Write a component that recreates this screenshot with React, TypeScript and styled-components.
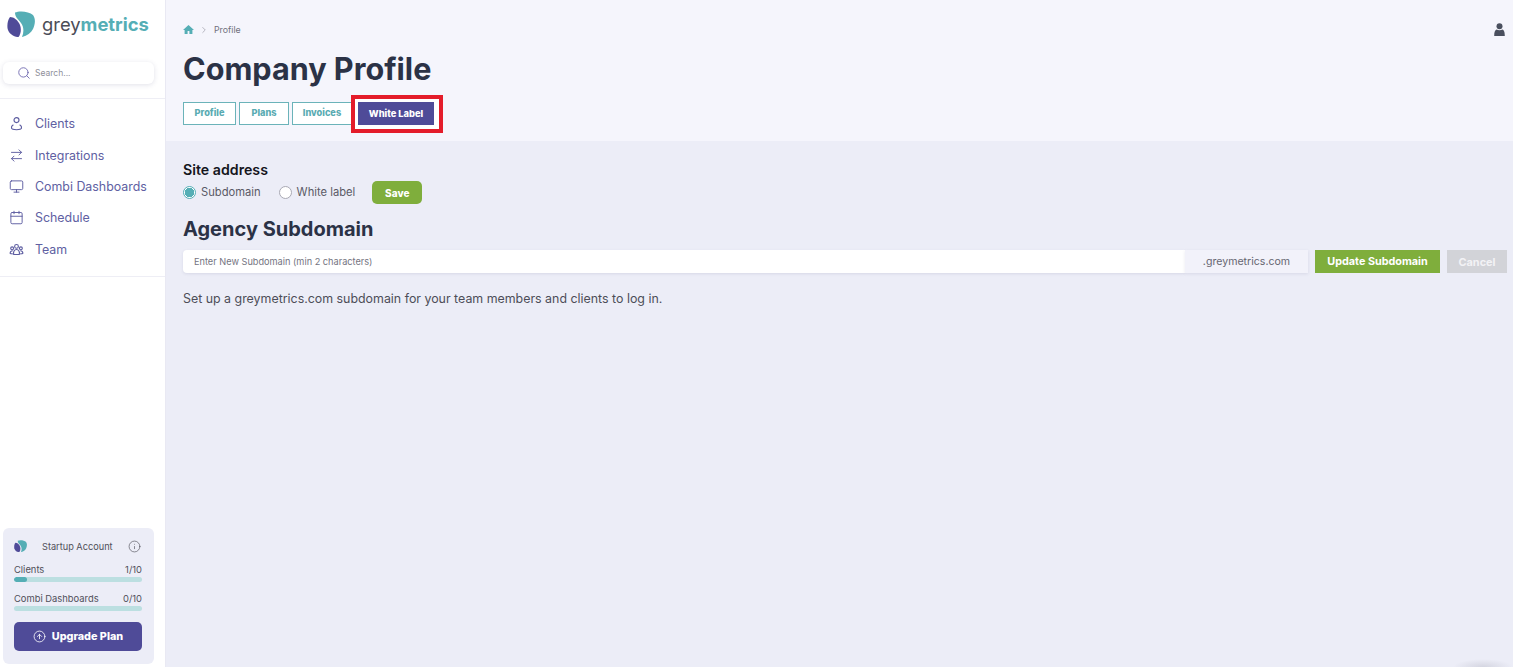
import React from "react";
import styled, { createGlobalStyle } from "styled-components";
import { Search, ArrowRightLeft, Monitor, Calendar, Info, CircleArrowUp, ChevronRight } from "lucide-react";

const Global = createGlobalStyle`
  html, body { margin: 0; padding: 0; height: 100%; overflow: hidden; }
  body { font-family: Inter, "Liberation Sans", sans-serif; background: #ecedf7; }
  #root { height: 100%; }
  * { box-sizing: border-box; }
`;

const Shell = styled.div`
  position: relative;
  display: flex;
  width: 1513px;
  height: 667px;
  overflow: hidden;
`;

const CornerShade = styled.div`
  position: absolute;
  right: 0;
  bottom: -8px;
  width: 60px;
  height: 16px;
  background: radial-gradient(ellipse at center, rgba(90, 90, 110, 0.16), rgba(90, 90, 110, 0) 70%);
`;

const Sidebar = styled.aside`
  width: 166px;
  flex: none;
  height: 667px;
  background: #fff;
  border-right: 1px solid #e9e9f3;
  display: flex;
  flex-direction: column;
`;

const LogoRow = styled.div`
  height: 49px;
  display: flex;
  align-items: center;
  padding: 0 0 1px 7px;
  gap: 7px;
`;

const LogoText = styled.div`
  font-size: 18.4px;
  color: #4b4d57;
`;

const LogoStrong = styled.span`
  font-weight: 700;
  color: #55aeb5;
`;

const SearchWrap = styled.div`
  padding: 13px 11px 14px 3px;
  border-bottom: 1px solid #eeeef5;
  height: 50px;
`;

const SearchBox = styled.div`
  height: 22px;
  background: #fff;
  border-radius: 6px;
  box-shadow: 0 1px 5px rgba(70, 70, 120, 0.16);
  display: flex;
  align-items: center;
  padding-left: 14px;
  gap: 4px;
  font-size: 8.5px;
  color: #8f8f9b;
  width: 151px;
`;

const Nav = styled.nav`
  display: flex;
  flex-direction: column;
  padding: 9px 0 11px 9px;
  border-bottom: 1px solid #eeeef5;
`;

const NavItem = styled.a`
  height: 31.4px;
  display: flex;
  align-items: center;
  gap: 11px;
  font-size: 12.4px;
  color: #6060a2;
  svg { color: #5c5ca0; flex: none; }
`;

const Plan = styled.div`
  margin: auto 11px 3px 3px;
  width: 151px;
  height: 136px;
  background: #ecedf7;
  border-radius: 6px;
  padding: 11px 12px 0 11px;
`;

const PlanHead = styled.div`
  display: flex;
  align-items: center;
  height: 14px;
  font-size: 9.2px;
  color: #50505a;
  margin-bottom: 11px;
`;

const PlanTitle = styled.span`
  margin-left: 15px;
  flex: 1;
`;

const InfoSlot = styled.span`
  display: flex;
  margin-right: 1px;
`;

const MeterLabel = styled.div`
  display: flex;
  justify-content: space-between;
  font-size: 9.4px;
  line-height: 11px;
  color: #50505a;
  margin-bottom: 2px;
`;

const Track = styled.div`
  height: 5px;
  border-radius: 3px;
  background: #bcdfe1;
  margin-bottom: 11px;
  overflow: hidden;
`;

const Fill = styled.div<{ $w: number }>`
  height: 100%;
  width: ${(p) => p.$w}px;
  border-radius: 3px;
  background: #55aeb5;
`;

const Upgrade = styled.div`
  margin-top: 2px;
  height: 29px;
  background: #4f4b98;
  border-radius: 5px;
  display: flex;
  align-items: center;
  justify-content: center;
  gap: 6px;
  color: #fff;
  font-size: 10.8px;
  font-weight: 800;
`;

const Main = styled.main`
  flex: 1;
  min-width: 0;
  display: flex;
  flex-direction: column;
`;

const Head = styled.header`
  height: 141px;
  flex: none;
  background: #f5f5fc;
  padding: 0 0 0 17px;
`;

const Crumbs = styled.div`
  height: 59px;
  display: flex;
  align-items: center;
  font-size: 8.8px;
  color: #71717c;
  gap: 5px;
`;

const UserSlot = styled.div`
  margin-left: auto;
  margin-right: 8px;
  display: flex;
`;

const Title = styled.h1`
  margin: -8px 0 0;
  height: 36px;
  line-height: 36px;
  font-size: 30.6px;
  font-weight: 700;
  color: #2b3246;
`;

const Tabs = styled.div`
  display: flex;
  margin-top: 8px;
  gap: 3px;
  align-items: flex-start;
`;

const Tab = styled.div<{ $w: number }>`
  width: ${(p) => p.$w}px;
  height: 23px;
  margin-top: 7px;
  padding-bottom: 2px;
  display: flex;
  align-items: center;
  justify-content: center;
  border: 1px solid #6bb3b9;
  background: #fff;
  font-size: 9.2px;
  font-weight: 800;
  color: #5aabb2;
`;

const ActiveFrame = styled.div`
  width: 92px;
  height: 38px;
  margin-left: -4px;
  border: 4px solid #e41c2a;
  background: #fff;
  padding: 3px 5px 4px 3px;
  z-index: 1;
`;

const ActiveTab = styled.div`
  height: 100%;
  background: #4f4b98;
  display: flex;
  align-items: center;
  justify-content: center;
  color: #fff;
  font-size: 9.3px;
  font-weight: 800;
`;

const Body = styled.section`
  flex: 1;
  padding: 21px 6px 0 17px;
  background: #ecedf7;
`;

const SiteLabel = styled.div`
  font-size: 14.2px;
  line-height: 16px;
  font-weight: 600;
  color: #14151d;
`;

const RadioRow = styled.div`
  display: flex;
  align-items: center;
  height: 23px;
  margin-top: 3px;
  font-size: 11.2px;
  color: #5a5a66;
`;

const RadioDot = styled.span<{ $on?: boolean }>`
  width: 13px;
  height: 13px;
  border-radius: 50%;
  border: 1px solid ${(p) => (p.$on ? "#55aeb5" : "#a9a9b4")};
  background: ${(p) => (p.$on ? "radial-gradient(circle, #55aeb5 0 4.5px, #fff 5px)" : "#fff")};
  margin-right: 5px;
  flex: none;
`;

const RadioText = styled.span<{ $gap: number }>`
  margin-right: ${(p) => p.$gap}px;
  padding-bottom: 2px;
`;

const SaveBtn = styled.div`
  width: 50px;
  height: 23px;
  border-radius: 5px;
  background: #7fae3c;
  color: #fff;
  font-size: 10px;
  font-weight: 800;
  display: flex;
  align-items: center;
  justify-content: center;
`;

const SubTitle = styled.h2`
  margin: 13px 0 0;
  font-size: 20px;
  line-height: 24px;
  font-weight: 700;
  color: #2b3246;
`;

const FormRow = styled.div`
  display: flex;
  align-items: stretch;
  height: 23px;
  margin-top: 9px;
`;

const InputField = styled.div`
  width: 1002px;
  background: #fff;
  border-radius: 4px 0 0 4px;
  box-shadow: 0 1px 3px rgba(70, 70, 120, 0.12);
  display: flex;
  align-items: center;
  padding-left: 11px;
  font-size: 9.2px;
  color: #74747f;
`;

const Suffix = styled.div`
  width: 123px;
  background: #f2f2fa;
  box-shadow: 0 1px 3px rgba(70, 70, 120, 0.12);
  display: flex;
  align-items: center;
  justify-content: center;
  font-size: 10.6px;
  color: #666671;
`;

const UpdateBtn = styled.div`
  width: 125px;
  margin-left: 7px;
  background: #7fae3c;
  color: #fff;
  font-size: 10.8px;
  font-weight: 700;
  display: flex;
  align-items: center;
  justify-content: center;
`;

const CancelBtn = styled.div`
  width: 60px;
  margin-left: 7px;
  background: #d2d3d8;
  color: #f2f2f5;
  font-size: 10.9px;
  font-weight: 700;
  display: flex;
  align-items: center;
  justify-content: center;
`;

const Hint = styled.p`
  margin: 18px 0 0;
  font-size: 12.4px;
  line-height: 16px;
  color: #4d4d58;
`;

const LogoMark = ({ size }: { size: number }) => (
  <svg width={size} height={size * 0.95} viewBox="0 0 28 26.500" fill="none">
    <path d="M8 1.500C12-.5 22 0 26 4c3 4 2 10 0 14-2 4-6 7-11 8 2-5 2-10-1-14C11 8 8 6 8 1.500z" fill="#55aeb5" />
    <path d="M3 6c4 0 7 3 9 6 2.500 4 2.500 10-.5 14C7 26 2 23 .7 18-.3 13 1 9 3 6z" fill="#4f4b98" />
  </svg>
);

const TeamIcon = () => (
  <svg width="15" height="15" viewBox="0 0 24 24" fill="none" stroke="currentColor" strokeWidth="1.8">
    <circle cx="12" cy="7" r="3" />
    <circle cx="5" cy="10" r="2.300" />
    <circle cx="19" cy="10" r="2.300" />
    <path d="M7.500 20c-1-4 1-8 4.500-8s5.500 4 4.500 8z" />
    <path d="M6 14c-3 0-4.500 2-4 4.500l4 .5M18 14c3 0 4.500 2 4 4.500l-4 .5" />
  </svg>
);

const ClientIcon = () => (
  <svg width="15" height="15" viewBox="0 0 24 24" fill="none" stroke="currentColor" strokeWidth="1.800">
    <circle cx="12" cy="6.500" r="4" />
    <path d="M7 14c-2.500 1.500-3.500 3.500-3 5.500.5 2 3 2.500 8 2.500s7.500-.5 8-2.500c.5-2-.5-4-3-5.500" />
  </svg>
);

const HomeIcon = () => (
  <svg width="11" height="11" viewBox="0 0 24 24" fill="#55aeb5">
    <path d="M12 2 0 13h3.500v9H10v-7h4v7h6.500v-9H24z" />
  </svg>
);

const PersonIcon = () => (
  <svg width="11" height="13" viewBox="0 0 11 13" fill="#4a4f5e">
    <circle cx="5.500" cy="3.200" r="3" />
    <path d="M2.500 6.500C1 7.200.2 8.800.2 13h10.600c0-4.200-.8-5.800-2.300-6.500-1.800 1-4.200 1-6 0z" />
  </svg>
);

const items = [
  { label: "Clients", icon: <ClientIcon /> },
  { label: "Integrations", icon: <ArrowRightLeft size={15} strokeWidth={1.5} /> },
  { label: "Combi Dashboards", icon: <Monitor size={15} strokeWidth={1.5} /> },
  { label: "Schedule", icon: <Calendar size={15} strokeWidth={1.5} /> },
  { label: "Team", icon: <TeamIcon /> },
];

export default function App() {
  return (
    <Shell>
      <Global />
      <Sidebar>
        <LogoRow>
          <LogoMark size={28} />
          <LogoText>
            grey<LogoStrong>metrics</LogoStrong>
          </LogoText>
        </LogoRow>
        <SearchWrap>
          <SearchBox>
            <Search size={14} color="#6a63ad" strokeWidth={1.5} />
            Search...
          </SearchBox>
        </SearchWrap>
        <Nav>
          {items.map((it) => (
            <NavItem key={it.label}>
              {it.icon}
              {it.label}
            </NavItem>
          ))}
        </Nav>
        <Plan>
          <PlanHead>
            <LogoMark size={13} />
            <PlanTitle>Startup Account</PlanTitle>
            <InfoSlot>
              <Info size={13} strokeWidth={1.2} color="#50505a" />
            </InfoSlot>
          </PlanHead>
          <MeterLabel>
            <span>Clients</span>
            <span>1/10</span>
          </MeterLabel>
          <Track>
            <Fill $w={13} />
          </Track>
          <MeterLabel>
            <span>Combi Dashboards</span>
            <span>0/10</span>
          </MeterLabel>
          <Track>
            <Fill $w={0} />
          </Track>
          <Upgrade>
            <CircleArrowUp size={13} strokeWidth={1.5} />
            Upgrade Plan
          </Upgrade>
        </Plan>
      </Sidebar>
      <Main>
        <Head>
          <Crumbs>
            <HomeIcon />
            <ChevronRight size={10} color="#a9a9b4" />
            <span>Profile</span>
            <UserSlot>
              <PersonIcon />
            </UserSlot>
          </Crumbs>
          <Title>Company Profile</Title>
          <Tabs>
            <Tab $w={53}>Profile</Tab>
            <Tab $w={50}>Plans</Tab>
            <Tab $w={60}>Invoices</Tab>
            <ActiveFrame>
              <ActiveTab>White Label</ActiveTab>
            </ActiveFrame>
          </Tabs>
        </Head>
        <Body>
          <SiteLabel>Site address</SiteLabel>
          <RadioRow>
            <RadioDot $on />
            <RadioText $gap={18}>Subdomain</RadioText>
            <RadioDot />
            <RadioText $gap={17}>White label</RadioText>
            <SaveBtn>Save</SaveBtn>
          </RadioRow>
          <SubTitle>Agency Subdomain</SubTitle>
          <FormRow>
            <InputField>Enter New Subdomain (min 2 characters)</InputField>
            <Suffix>.greymetrics.com</Suffix>
            <UpdateBtn>Update Subdomain</UpdateBtn>
            <CancelBtn>Cancel</CancelBtn>
          </FormRow>
          <Hint>Set up a greymetrics.com subdomain for your team members and clients to log in.</Hint>
        </Body>
      </Main>
      <CornerShade />
    </Shell>
  );
}
